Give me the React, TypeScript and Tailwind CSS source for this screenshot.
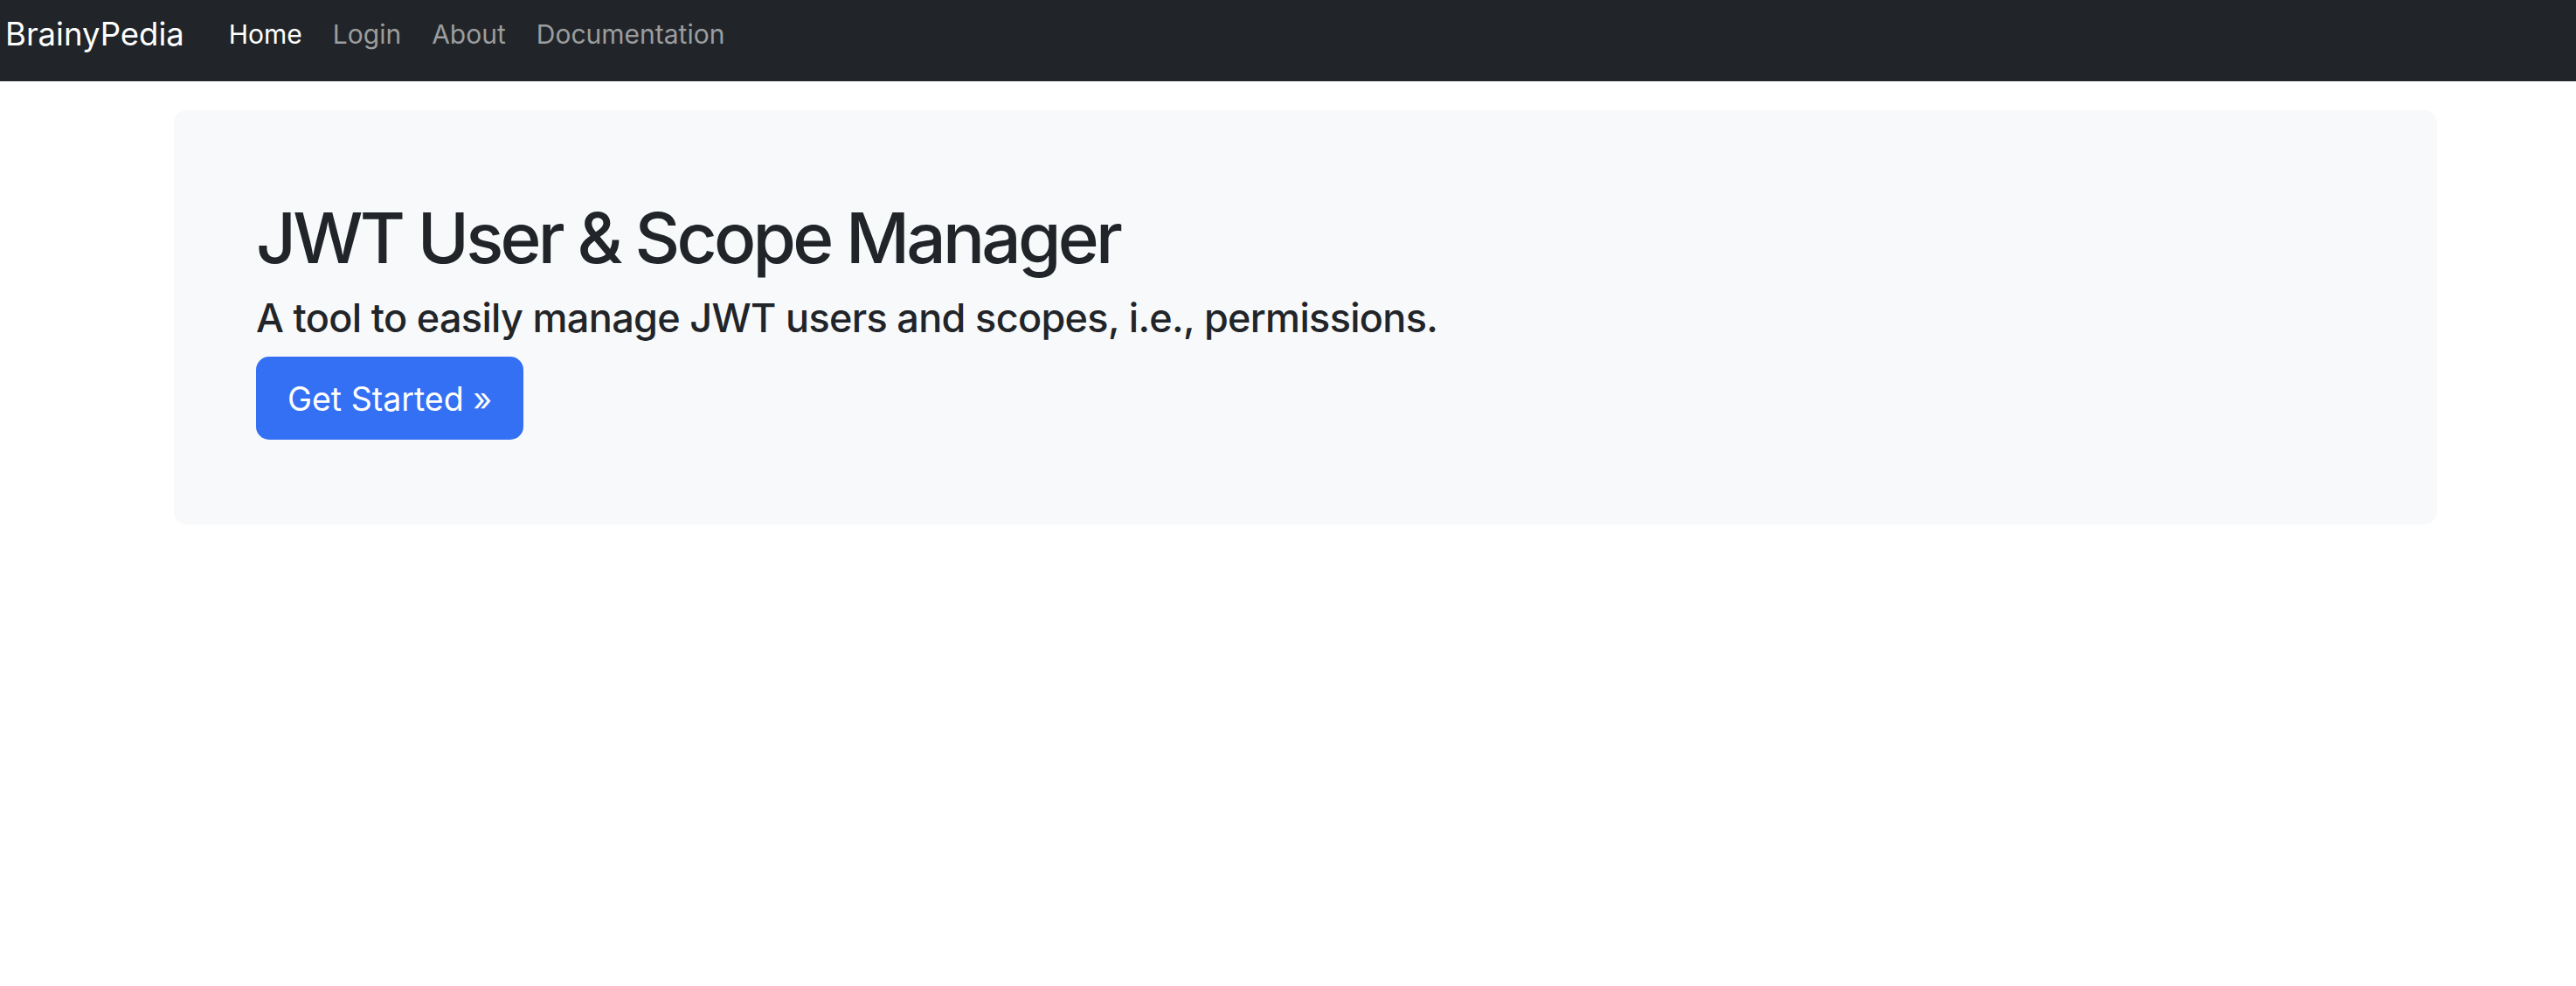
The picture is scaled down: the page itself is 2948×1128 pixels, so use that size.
const links = [
  { label: "Home", active: true },
  { label: "Login" },
  { label: "About" },
  { label: "Documentation" },
];

function Navbar() {
  return (
    <nav className="flex h-[93px] items-center bg-[#212529] pb-[14px]">
      <a href="#" className="pl-[6px] text-[36.5px] leading-[1.5] text-white">
        BrainyPedia
      </a>
      <ul className="ml-[51px] flex items-center gap-[35px]">
        {links.map((l) => (
          <li key={l.label}>
            <a
              href="#"
              className={
                "text-[30px] leading-[1.5] " +
                (l.active ? "text-white" : "text-[#9b9d9f]")
              }
            >
              {l.label}
            </a>
          </li>
        ))}
      </ul>
    </nav>
  );
}

export default function App() {
  return (
    <div className="min-h-screen bg-white font-['Inter',sans-serif] text-[#212529]">
      <Navbar />
      <main className="pt-[33px] pl-[199px]">
        <section className="w-[2590px] rounded-[15px] bg-[#f8f9fa] px-[94px] pt-[98px] pb-[97px]">
          <h1 className="text-[80px] font-medium leading-[1.2] tracking-[-0.047em]">
            JWT User &amp; Scope Manager
          </h1>
          <p className="mt-[17px] text-[45px] font-medium leading-[1.2] tracking-[-0.015em]">
            A tool to easily manage JWT users and scopes, i.e., permissions.
          </p>
          <a
            href="#"
            className="mt-[17px] inline-flex h-[95px] items-center rounded-[15px] bg-[#3470f4] px-[36px] pt-[4px] text-[37.5px] leading-[1.5] text-white"
          >
            Get Started &raquo;
          </a>
        </section>
      </main>
    </div>
  );
}
